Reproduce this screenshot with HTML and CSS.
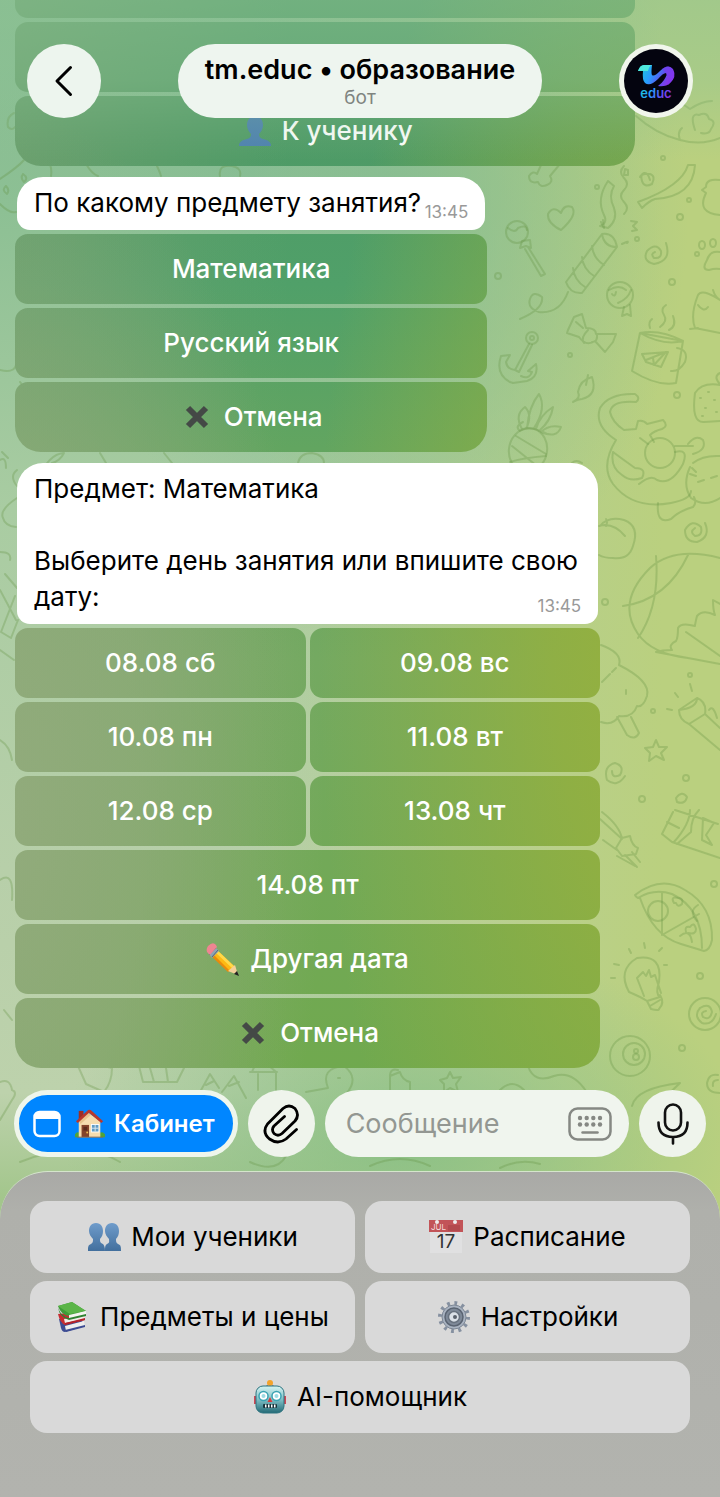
FILE: index.html
```html
<!DOCTYPE html>
<html lang="ru">
<head>
<meta charset="utf-8">
<meta name="viewport" content="width=device-width, initial-scale=1">
<title>tm.educ • образование</title>
<link rel="stylesheet" href="styles.css">
</head>
<body>
<div class="app">
  <svg class="doodles" viewBox="0 0 720 1497" preserveAspectRatio="xMaxYMin slice" aria-hidden="true">
    <!-- top right -->
    <path d="M636 116q20 18 44 24q22 6 40-2M680 140q-3-8 2-12M695 130q-6-18 4-15q8-4 10 4q8 2 2 10q-2 6-10 4M660 97q14 0 30 12q12-8 22-8"/>
    <path d="M541 165l-4 9q-4-4-8 2q0 8 9 6q2 6 9 3q7-3 3-9l10-12"/>
    <path d="M608 181q-12 18-4 34q4 8-4 11l8 2q10-8 6-20q-6-12 0-22zM624 166q-6 6 0 12t0 12q-6 6 0 12t0 12"/>
    <path d="M638 202q44-16 50-37h7q-2 32-40 34q-6 2-13 9zM650 180q-2-8-6-7t-2 8t10 3q4-8-2-10q-8-1-10 3"/>
    <path d="M720 180q-14-2-14 7l-4 3l4 3q-10 20 14 22"/>
    <path d="M561 230q-14-7-13-16q5-9 13-1q3-9 11-6q6 8-11 23z"/>
    <circle cx="517" cy="232" r="11"/><path d="M508 228q7 6 10 0q8-4 9 2M522 241l-2 7l6-2l5 2l-1-8zM525 249l16 27l4-2l-17-27"/>
    <path d="M602 234q12-2 15 13l-35 46q-12 1-16-11zM602 234q2 13 15 13M592 246q1 12 12 19M582 257q1 12 12 19M573 268q1 12 12 19M568 292q-8 22-29 20q-12-4-9-13t12-2q2 12-22 22M601 222l3 6l-1-8M622 244q8-4 5-1M631 221l6 1-4 4l4 4l-5 1"/>
    <path d="M666 243q6 18-12 21q-12-3-7-13q9-9 14 0q1 8-7 7q-4-4 1-6"/>
    <ellipse cx="702" cy="245" rx="3" ry="4"/><ellipse cx="713" cy="243" rx="3" ry="4"/><circle cx="697" cy="254" r="2"/><path d="M720 252q-10-2-13 8q-6 10 2 10q6-2 11-1"/>
    <circle cx="620" cy="295" r="13"/><path d="M609 290q10-6 17 0M612 294q3 4 4-2M618 303q10-4 13-13M624 307l-2 9l5-2l4 2l-1-11"/>
    <path d="M568 330l6-13l8-3l4 14q10 0 10 6l20 0l-3 8l-8 10l-10-11q-9 6-16-4l-12-4zM588 330q-8 8-4 13M597 334q1 8-5 8M576 322l7 6"/>
    <circle cx="532" cy="338" r="6"/><circle cx="532" cy="338" r="2"/><path d="M529 344l-14 26l4 2l13-27M515 370q-8-1-9-8l4-7l-9 1q-6 18 9 26l3 1l14-2q12-4 9-17l-8 7l4 1q-3 8-11 4"/>
    <path d="M640 333l43 8-7 42q-18 4-44-12zM640 333q20-4 43 8q-20 5-43-8M677 348q12 2 8 14q-6 10-14 9M642 354l26-2l-7 15l-15-5zM646 360l20-8l-12 13l-1-7M650 328q-2-6 2-9M660 327q8-6 4-12q-4-6 2-10M669 330q8-4 4-14"/>
    <path d="M720 300q-18-12-22-5q-8 20-3 33l25 5M690 329l8-1M698 305q6 8 10 2M713 290q2 7 7 10"/>
    <path d="M573 402q8-4 5-10q2-12 14-15q6 18-10 22q-4 0-9 3zM586 385l2-10"/>
    <ellipse cx="528" cy="450" rx="19" ry="22" transform="rotate(12 528 450)"/><path d="M520 431q10-6 27 3M512 446l30 24M516 436l30 18M510 462q12-4 36-6M522 429q-8-14 3-22q8 8 1 22M527 428q2-22 12-34q8 14-5 34M536 429q4-14 17-22q-2 14-14 24M541 432q8-8 20-5q-4 12-20 5M519 430q-4-4 4-8"/>
    <path d="M616 440q-22-14-16-32q9-15 35-14q6 4 1 8q-24-2-26 10q2 10 14 18l12-1l2-8q6-1 9 3l16-4q6 6-1 9q-8 2-12 6l4 7M616 440q-16 26-3 44q20 26 58 19q20-4 20-12M613 452q8 6 22 16q12 0 7 10q-12 4-20-3q-12-8-9-23M640 438l8 6M675 446l18 0M675 452q14-4 8 12q-12 22-26 16q-6-6-18 4"/><circle cx="660" cy="453" r="15"/>
    <path d="M693 463q10-8 27-7M690 467q-8 18 1 31q14 10 29 0M688 444q8-10 15-4q4 10-10 14M658 503q-2 22 13 16q8-8 22-12q4-4 1-10M692 468l4 4M698 482l6-2M711 478l6-2M690 474l6 2"/>
    <path d="M720 385q-18-3-25 8q-4 30 9 29l16-1M720 373q-8 4 2 13M700 398h1M708 392h1M714 400h1M705 408h1M716 412h1M702 416h1"/>
    <!-- middle right -->
    <path d="M600 526q8-10 24-6q16 6 9 26q-4 14-20 12q-9 0-14-3M599 526q14-4 26 10M606 526q2-4 0-7"/>
    <path d="M705 523q6 14-8 19q-12 0-12-12q7-12 16-3q2 9-6 9q-6-4 0-8"/>
    <path d="M720 558q-46-12-70 10q-34 34-12 66q14 20 50 24M656 556q4 50-18 82M623 606q44-6 65-51M720 604l-7-4q0 10 2 15q-12-6-18 1q-2 8-2 10q-14-4-17 2q0 10-2 13q-8 4-4 9q-10 0-16 2l64 12M686 632l34 24"/>
    <path d="M601 645q22 8 18 20q32 16 28 31q-4 12-10 10q-4 12-18 10q-6 10-18 6M602 682l8-8M612 672l4-4M626 690v4M617 717l10 18q8 6 12-2l-8-16"/>
    <path d="M679 710l18-12q10 4 8 16l-16 10q-10-4-10-14zM679 710q18-2 18-12M689 724l31 26M705 714l15 14M709 710q4-6 8 8M675 693l3 4M690 684l2 7M667 709l5 1"/>
    <path d="M656 740l3 7l8 0l-6 6l3 7l-8-4l-7 5l1-8l-5-5l8-1zM625 776q-8 12-18 4q-4-14 8-17q10 3 5 12q-8 4-8-4"/>
    <path d="M602 812q18 14 20 27l-22-20M603 840l14 10M622 838l8-2q2 10 8 12l-2 6l-14 2l-6-8zM617 856l18 10M625 855l12 12M632 852l8 10"/>
    <path d="M675 810l43 14M673 812l-11 22l10 8l48 16M690 810q0 14-16 32M699 810q-8 8-8 22l-14 12M667 822l12 6M703 818l11 5l-8 12l6 10l-10-5zM676 798q6-8 11-1q-2 8-10 5z"/>
    <path d="M635 895q26-20 50-5q28 16 27 50q-2 10-8 11l-23-7q-28-8-41-46q-4 0-5-3zM638 898q16-10 34-4q30 14 30 54M662 892v43l37-21"/><circle cx="658" cy="911" r="10"/><path d="M680 936q10-8 12 6M698 905q-10 6-1 16M674 903q-4-7 4-5q6 0 4 6q-4 4-6-1zM686 932q-2-6 4-5q4-6 6 2q0 6-8 4"/>
    <path d="M647 1001q-6-4-18-9q-12-22 8-34q26-4 22 24q-4 12 1 15zM647 1001l4 8q8 2 8 0q6-6 1-14M650 1006l10-6M644 996l-7-18l6-6l3 4l3-6l2 7l4-2l6 18M614 964l5 1M629 949l2 4M644 943l1 5M659 951l3-3M611 978l4 0M664 965l3 0"/>
    <circle cx="630" cy="1056" r="20"/><circle cx="634" cy="1054" r="11"/><circle cx="636" cy="1051" r="2"/><circle cx="636" cy="1057" r="3"/>
    <circle cx="705" cy="1014" r="16"/><path d="M716 1014q-4 12-14 9q-9-7-2-15q10-6 12 4q-2 9-9 5q-3-5 3-6M718 1075q-9-2-11 8q0 10 13 10M718 1080q-6 0-5 6"/>
    <path d="M632 1106q4-18 48-23q-12 12-26 24"/>
    <g><circle cx="498" cy="276" r="3"/><circle cx="597" cy="187" r="2"/><circle cx="680" cy="217" r="3"/><circle cx="672" cy="282" r="3"/><circle cx="570" cy="355" r="2"/><circle cx="677" cy="395" r="3"/><circle cx="637" cy="239" r="2"/><circle cx="605" cy="602" r="3"/><circle cx="690" cy="675" r="2"/><circle cx="653" cy="711" r="2"/><circle cx="686" cy="778" r="3"/><circle cx="642" cy="799" r="3"/><circle cx="714" cy="884" r="3"/><circle cx="700" cy="976" r="3"/><circle cx="682" cy="1048" r="3"/><circle cx="663" cy="158" r="2"/><circle cx="689" cy="200" r="2"/></g>
    <!-- left edge and strips between bubbles -->
    <path d="M14 113q-8 4-6 14q4 4 7 0M0 179q18-12 24-19M0 204q10 10 16 8M50 164q2 6 1 12M86 164q6 10 12 12M156 164q4 8 5 12M185 164l4-6M220 176q-2-12 12-10q10 2 8 10M6 186q4 4 1 8q-6-4-1-8M23 174q6 4 1 8q-4-4-1-8"/>
    <path d="M0 370q18 4 16-10M2 452l6 6M0 460q6-4 6 8M38 480q10-26 26-27q-4 8-12 10M17 470q-8 6 0 16M17 498q-18 12-14 20q2 8 13 9M5 574l12 14M0 552q12 0 10 8M15 596l-14 36l10 6l7-18M0 590l16 30M100 453l6 10M172 463l-8-10M298 463q2-10 14-10q12 2 12 10M572 463q4-4 10 0"/>
    <path d="M78 1066l8 18l18 8q8-10 8-24l-8-2M139 1066l4 16l34 0l8-16M150 1068l4 14M166 1068l2 14M200 1092l10-18l9 14M206 1085l8-4M222 1092l12-16l12 22M229 1086l10-4M250 1072h27M252 1072q6-18 24 0v20M258 1090v-16M306 1092l22-4q-8-20 16-22q16 12 2 28l-12 12M338 1078h2M0 1082q10-4 12 8q6 2 0 10l-12 20M390 1090v-14l10-4q2 8 10 10v10M390 1076q0-8 8-6M450 1072l3 6l8-1l-5 7l2 8l-8-4l-6 4l0-8l-4-4l7-2zM528 1066q6 18 26 10q18-6 32 15M500 1090q12-12 24 0"/>
    <path d="M20 1162q60-24 100 0M250 1162q26 12 36-6M370 1166q30-14 60 0M500 1168q20-10 40-4"/>
    <path d="M628 170v5h-4l1-6zM20 382q4 4 0 6M0 650l14 10M0 740q10 6 12 20M0 880q14-10 12 20M4 1010l8 10"/>
  </svg>

  <header class="topbar">
    <button class="round back" type="button" aria-label="Назад">
      <svg viewBox="0 0 20 32" class="ico-back"><path d="M16.500 2.500L3 16l13.500 13.500" fill="none" stroke="#000" stroke-width="3" stroke-linecap="round" stroke-linejoin="round"/></svg>
    </button>
    <div class="title">
      <h1>tm.educ • образование</h1>
      <p>бот</p>
    </div>
    <a class="round avatar" href="#" aria-label="Профиль">
      <svg viewBox="0 0 64 64">
        <defs>
          <linearGradient id="rib" x1="0" y1="0" x2="1" y2=".3"><stop offset="0" stop-color="#19d5cf"/><stop offset=".45" stop-color="#2a9dff"/><stop offset=".75" stop-color="#5a55f0"/><stop offset="1" stop-color="#8a35e8"/></linearGradient>
        </defs>
        <circle cx="32" cy="32" r="32" fill="#04040f"/>
        <path d="M14 22q2-6 6-6h8q-1 8 0 10q2 2 8-4q8-8 13-2q4 8-3 14q-4 4-12 3q4-3 6-6q4-6 2-7q-3 0-8 6q-8 8-13 4q-3-3-2-12z" fill="url(#rib)"/>
        <path d="M14 22q2-6 6-6h8q-3 1-4 6z" fill="#4fe8dc"/>
        <path d="M38 20q8-6 12 3q1 8-6 13q2-10-6-16z" fill="#7b38ee" opacity=".6"/>
        <text x="32" y="49" text-anchor="middle" class="logo-text" fill="url(#rib)">educ</text>
      </svg>
    </a>
  </header>

  <main class="chat">
    <section class="group group-a">
      <div class="keys">
        <button type="button" class="key wide cut" aria-label="Предыдущее действие"></button>
        <button type="button" class="key wide" aria-label="Действие"></button>
        <button type="button" class="key wide last">
          <svg class="emoji" viewBox="0 0 34 32"><path d="M17 1c5 0 8 4 8 9 0 4-2 7-4 9 0 3 1 4 4 5 5 1 8 3 8 7H1c0-4 3-6 8-7 3-1 4-2 4-5-2-2-4-5-4-9 0-5 3-9 8-9z" fill="#4d80b0"/></svg>
          <span>К ученику</span>
        </button>
      </div>
    </section>

    <section class="group group-b">
      <div class="bubble"><p>По какому предмету занятия? <time>13:45</time></p></div>
      <div class="keys">
        <button type="button" class="key wide">Математика</button>
        <button type="button" class="key wide">Русский язык</button>
        <button type="button" class="key wide last">
          <svg class="emoji cross" viewBox="0 0 34 32"><path d="M8 7l18 18M26 7L8 25" stroke="#444946" stroke-width="6"/></svg>
          <span>Отмена</span>
        </button>
      </div>
    </section>

    <section class="group group-c">
      <div class="bubble"><p>Предмет: Математика<br><br>Выберите день занятия или впишите свою дату: <time>13:45</time></p></div>
      <div class="keys">
        <button type="button" class="key">08.08 сб</button>
        <button type="button" class="key">09.08 вс</button>
        <button type="button" class="key">10.08 пн</button>
        <button type="button" class="key">11.08 вт</button>
        <button type="button" class="key">12.08 ср</button>
        <button type="button" class="key">13.08 чт</button>
        <button type="button" class="key wide">14.08 пт</button>
        <button type="button" class="key wide">
          <svg class="emoji" viewBox="0 0 34 34">
            <path d="M9 6l19 18-5 5L5 12z" fill="#fdb913"/><path d="M11 8l18 17-2 2L9 10z" fill="#ffd84a"/><path d="M6 11l18 18-2 1L4 13z" fill="#e88b0c"/>
            <path d="M29 23l3 10-10-4z" fill="#f3cf98"/><path d="M31 29l2 5-5-2z" fill="#222"/>
            <path d="M8 4l5 5-7 7-4-5z" fill="#8fa3b4"/><path d="M10 6l-7 7M12 8l-6 7" stroke="#56697a"/>
            <path d="M2 4q5-5 8-1l1 2-7 8-3-3q-1-3 1-6z" fill="#ee8591"/>
          </svg>
          <span>Другая дата</span>
        </button>
        <button type="button" class="key wide last">
          <svg class="emoji cross" viewBox="0 0 34 32"><path d="M8 7l18 18M26 7L8 25" stroke="#444946" stroke-width="6"/></svg>
          <span>Отмена</span>
        </button>
      </div>
    </section>
  </main>

  <form class="composer">
    <button type="button" class="cabinet">
      <svg class="ico-window" viewBox="0 0 28 28"><rect x="1.500" y="2" width="25" height="24" rx="5" fill="none" stroke="#fff" stroke-width="2.500"/><path d="M1.500 9V7q0-5 5-5h15q5 0 5 5v2z" fill="#fff"/></svg>
      <svg class="house" viewBox="0 0 32 32">
        <rect x="4" y="2" width="5" height="9" fill="#9e2f24"/><path d="M0 27q2-4 6-1v4H0zM32 27q-3-4-6-1v4h6z" fill="#4fa33a"/>
        <path d="M4 13L14 4l13 9v17H4z" fill="#f6dcae"/><path d="M4 13L14 4l3 2-11 10z" fill="#e8c48c"/>
        <path d="M1 13L14 1q2-1 4 1l12 11-2 2L15 4 3 15z" fill="#b9382c"/>
        <rect x="7" y="17" width="8" height="13" fill="#84432a"/><rect x="9" y="19" width="4" height="4" fill="#5c2b1c"/><circle cx="13" cy="25" r="1" fill="#f0c050"/>
        <rect x="17" y="16" width="9" height="9" fill="#fff"/><rect x="18" y="17" width="7" height="7" fill="#5f9bc4"/><path d="M21.500 17v7M18 20.500h7" stroke="#dbe8f0"/>
        <path d="M2 30h28" stroke="#8a6a50"/>
      </svg>
      <span>Кабинет</span>
    </button>
    <button type="button" class="round small" aria-label="Прикрепить">
      <svg class="ico-clip" viewBox="0 0 36 40"><path d="M33.500 25.500L23 35Q15 41 6.500 35Q-1.500 28 4.500 20L20 4.500Q26-.5 32 4.500Q37 11 32 17L19 29.500Q15 33 11 29.500Q8 25.500 11 22L21.500 12.500" fill="none" stroke="#000" stroke-width="2.800" stroke-linecap="round" stroke-linejoin="round"/></svg>
    </button>
    <div class="field">
      <input type="text" placeholder="Сообщение" aria-label="Сообщение">
      <button type="button" class="kbd" aria-label="Клавиатура бота">
        <svg viewBox="0 0 44 34"><rect x="1.500" y="1.500" width="41" height="31" rx="8" fill="none" stroke="#858883" stroke-width="2.500"/><g fill="#858883"><circle cx="12" cy="11" r="2.200"/><circle cx="18.700" cy="11" r="2.200"/><circle cx="25.300" cy="11" r="2.200"/><circle cx="32" cy="11" r="2.200"/><circle cx="12" cy="17.500" r="2.200"/><circle cx="18.700" cy="17.500" r="2.200"/><circle cx="25.300" cy="17.500" r="2.200"/><circle cx="32" cy="17.500" r="2.200"/></g><path d="M14.500 25.500h15" stroke="#858883" stroke-width="2.500" stroke-linecap="round"/></svg>
      </button>
    </div>
    <button type="button" class="round small" aria-label="Голосовое сообщение">
      <svg class="ico-mic" viewBox="0 0 32 42"><g fill="none" stroke="#111" stroke-width="2.600" stroke-linecap="round"><rect x="8" y="1.500" width="16" height="26" rx="8"/><path d="M1.500 19.500q0 14.500 14.500 14.500t14.500-14.500M16 34v6.500"/></g></svg>
    </button>
  </form>

  <nav class="panel">
    <button type="button" class="menu-key">
      <svg class="emoji" viewBox="0 0 34 28"><defs><linearGradient id="ppl" x1="0" y1="0" x2="0" y2="1"><stop offset="0" stop-color="#6f9ccb"/><stop offset="1" stop-color="#426f9d"/></linearGradient></defs>
      <path d="M9 0c5 0 7 4 7 8 0 3-1 6-3 8 0 2 0 4 3 5 1 1 2 3 2 7H1c0-4 0-6 3-7 2-1 2-3 2-5-2-2-4-5-4-8 0-4 2-8 7-8z" fill="url(#ppl)"/><path d="M25 0c5 0 7 4 7 8 0 3-1 6-3 8 0 2 0 4 2 5 3 1 3 3 3 7H18c0-4 0-6 2-7 3-1 2-3 2-5-2-2-4-5-4-8 0-4 2-8 7-8z" fill="url(#ppl)"/></svg>
      <span>Мои ученики</span>
    </button>
    <button type="button" class="menu-key">
      <svg class="emoji" viewBox="0 0 34 34"><path d="M1 11h32v22H1z" fill="#e0e0e1"/><path d="M0 0h34v12H0z" fill="#c25458"/><circle cx="8" cy="2" r="2" fill="#eee"/><circle cx="26" cy="2" r="2" fill="#eee"/><path d="M20 5v6M22 5v6M24 5v6M26 5v6M28 5v6M30 5v6" stroke="#a44045"/><text x="2" y="10" class="cal-month">JUL</text><text x="17" y="28" text-anchor="middle" class="cal-day">17</text></svg>
      <span>Расписание</span>
    </button>
    <button type="button" class="menu-key">
      <svg class="emoji" viewBox="0 0 34 32">
        <path d="M3 18l20-3 6 10-20 6q-3 0-4-4z" fill="#3d4c93"/><path d="M9 25l19-5 1 5-19 5z" fill="#eee"/><path d="M9 29l20-5v2L10 31z" fill="#3d4c93"/>
        <path d="M2 13l20-2 7 8-20 5q-5-2-7-11z" fill="#c62d32"/><path d="M8 18l20-4 1 4-20 4z" fill="#f2eee8"/><path d="M9 22l20-5v2L9 24z" fill="#b3222a"/>
        <path d="M2 5L16 1l14 9-17 5Q5 14 2 5z" fill="#3f9c39"/><path d="M2 5L16 1l14 9-16 3z" fill="#5bb548"/><path d="M13 14l17-4v4l-17 4z" fill="#f5f5f0"/><path d="M2 6q2 9 11 11l17-4v2l-17 4Q3 16 2 6z" fill="#2f8230"/>
      </svg>
      <span>Предметы и цены</span>
    </button>
    <button type="button" class="menu-key">
      <svg class="emoji" viewBox="0 0 34 34"><circle cx="17" cy="17" r="14" fill="none" stroke="#8590a0" stroke-width="4" stroke-dasharray="2.800 4.530"/><circle cx="17" cy="17" r="12" fill="#a9b3c1" stroke="#7d8795" stroke-width="1"/><circle cx="17" cy="17" r="9" fill="#7e8998" stroke="#5a6472" stroke-width="1.500"/><circle cx="17" cy="17" r="5.500" fill="#dbe1e8" stroke="#68727f" stroke-width="1.500"/><circle cx="18" cy="17" r="2" fill="#59616c"/></svg>
      <span>Настройки</span>
    </button>
    <button type="button" class="menu-key wide">
      <svg class="emoji" viewBox="0 0 34 34"><defs><linearGradient id="bot" x1="0" y1="0" x2="0" y2="1"><stop offset="0" stop-color="#d5f3f2"/><stop offset=".5" stop-color="#7fc0c6"/><stop offset="1" stop-color="#236975"/></linearGradient></defs>
      <path d="M14 5q3 3 6 0l2 3H12z" fill="#5a5563"/><circle cx="17" cy="3" r="3" fill="#f3a32a"/><path d="M1 16h3v8H1zM30 16h3v8h-3z" fill="#cf4755"/><rect x="3" y="6" width="28" height="27" rx="7" fill="url(#bot)" stroke="#2d7480"/><circle cx="10.500" cy="16" r="4.500" fill="#fff" stroke="#3aa2b2" stroke-width="1.500"/><circle cx="23.500" cy="16" r="4.500" fill="#fff" stroke="#3aa2b2" stroke-width="1.500"/><circle cx="10.500" cy="16" r="2" fill="#9bdbe3"/><circle cx="23.500" cy="16" r="2" fill="#9bdbe3"/><path d="M17 17l2.500 5h-5z" fill="#d83a3e"/><rect x="10" y="24" width="14" height="4" rx="1" fill="#16343c"/><path d="M12 26h1.500M15 26h1.500M18 26h1.500M21 26h1.500" stroke="#fff" stroke-width="3"/></svg>
      <span>AI-помощник</span>
    </button>
  </nav>
</div>
</body>
</html>
```
FILE: styles.css
```css
*, *::before, *::after { box-sizing: border-box; }

body {
  margin: 0;
  font-family: Inter, "Noto Sans", sans-serif;
  color: #000;
}

button {
  font: inherit;
  color: inherit;
  border: 0;
  padding: 0;
  cursor: pointer;
}

h1, p { margin: 0; }

.app {
  position: relative;
  display: flex;
  flex-direction: column;
  min-height: 100vh;
  overflow: hidden;
  background:
    radial-gradient(ellipse 340px 200px at 56% 76%, rgba(136, 191, 133, .9), rgba(136, 191, 133, 0)),
    radial-gradient(ellipse 300px 420px at 54% 14%, rgba(130, 187, 148, .75), rgba(130, 187, 148, 0)),
    linear-gradient(90deg, rgba(186, 208, 127, 0) 35%, #bad07f 92%),
    linear-gradient(180deg, #86bb91 0, #8dc094 14%, #a9cca2 34%, #b7cfa9 58%, #bdd2ac 73%, #a3c68c 80%);
}

.doodles {
  position: absolute;
  inset: 0;
  width: 100%;
  height: 100%;
  fill: none;
  stroke: rgba(100, 145, 66, .3);
  stroke-width: 2;
  stroke-linecap: round;
  stroke-linejoin: round;
  pointer-events: none;
}

/* Header floats over the scrolled conversation */
.topbar {
  position: absolute;
  inset: 0 0 auto;
  z-index: 2;
  display: flex;
  justify-content: space-between;
  align-items: flex-start;
  height: 160px;
  padding: 44px 27px 0;
  background: linear-gradient(180deg, rgba(142, 195, 148, .55) 0, rgba(142, 195, 148, .4) 50%, rgba(142, 195, 148, 0) 100%);
}

.round {
  display: flex;
  align-items: center;
  justify-content: center;
  flex: none;
  width: 74px;
  height: 74px;
  border-radius: 50%;
  background: #edf5ee;
}

.ico-back { width: 20px; height: 32px; }

.avatar svg { width: 64px; height: 64px; }
.avatar { background: #f1f6ec; }
.logo-text { font-size: 13px; font-weight: 600; }

.title {
  display: flex;
  flex-direction: column;
  align-items: center;
  height: 74px;
  padding: 8px 27px 0;
  border-radius: 37px;
  background: #eef5ef;
  text-align: center;
}
.title h1 { font-size: 27px; line-height: 36px; font-weight: 600; white-space: nowrap; }
.title p { font-size: 19px; line-height: 20px; color: #7f8480; }

.chat {
  position: relative;
  display: flex;
  flex-direction: column;
  gap: 11px;
  padding-left: 15px;
}

.group { display: flex; flex-direction: column; gap: 4px; }
.group-a { width: 88%; }
.group-b { width: 67%; }
.group-c { width: 83%; }

.bubble {
  margin: 0 2px;
  padding: 8px 17px 9px;
  border-radius: 26px 26px 13px 13px;
  background: #fff;
  font-size: 26px;
  line-height: 36px;
}
.bubble time {
  float: right;
  margin-top: 18px;
  font-size: 17px;
  line-height: 18px;
  color: #999;
}

.keys {
  display: grid;
  grid-template-columns: 1fr 1fr;
  gap: 4px;
}

.key {
  display: flex;
  align-items: center;
  justify-content: center;
  gap: 10px;
  height: 70px;
  border-radius: 13px;
  color: #fff;
  font-size: 26px;
  line-height: 36px;
  font-weight: 500;
  background:
    radial-gradient(ellipse 45% 48% at 0 55%, rgba(150, 172, 128, .85) 0, rgba(150, 172, 128, .6) 45%, rgba(150, 172, 128, 0) 100%) fixed,
    radial-gradient(ellipse 50% 60% at 94% 42%, rgba(152, 177, 60, 1) 0, rgba(152, 177, 60, .75) 35%, rgba(152, 177, 60, 0) 100%) fixed,
    linear-gradient(90deg, rgba(132, 164, 116, .5) 0, rgba(132, 164, 116, 0) 40%) fixed,
    linear-gradient(180deg, #4e9a66 9%, #50a069 19%, #62a560 30%, #74a961 44%, #70a94e 72%) fixed;
}
.wide { grid-column: 1 / -1; }
.cut { height: 18px; border-radius: 0 0 13px 13px; }
.last { border-radius: 13px 13px 26px 26px; }

.emoji { flex: none; width: 34px; height: 34px; }

.composer {
  position: relative;
  display: flex;
  gap: 10px;
  padding: 22px 14px 14px;
}

.cabinet {
  display: flex;
  align-items: center;
  gap: 14px;
  height: 67px;
  padding: 0 18px 0 14px;
  border: 5px solid #eff6ec;
  border-radius: 34px;
  background: #0086ff;
  color: #fff;
  font-size: 24px;
  font-weight: 600;
}
.cabinet span { margin-left: -5px; }
.ico-window { width: 28px; height: 28px; }
.house { width: 30px; height: 32px; }

.small { width: 67px; height: 67px; background: #eff4ec; }
.ico-clip { width: 36px; height: 40px; }
.ico-mic { width: 32px; height: 42px; }

.field {
  display: flex;
  flex: 1;
  align-items: center;
  min-width: 0;
  padding: 0 17px 0 21px;
  border-radius: 34px;
  background: #f0f5ee;
}
.field input {
  flex: 1;
  min-width: 0;
  padding: 0;
  border: 0;
  outline: 0;
  background: none;
  font: inherit;
  font-size: 27px;
}
.field input::placeholder { color: #939792; opacity: 1; }
.kbd { display: flex; background: none; }
.kbd svg { width: 44px; height: 34px; }

.panel {
  position: relative;
  flex: 1;
  display: grid;
  grid-template-columns: 1fr 1fr;
  grid-auto-rows: 72px;
  align-content: start;
  gap: 8px 10px;
  padding: 29px 30px 64px;
  border-top: 1px solid #d5e5cc;
  border-radius: 48px 48px 0 0;
  background: linear-gradient(180deg, #a9a9a6 0, #afb0ab 12%, #b2b3ae 100%);
}

.menu-key {
  display: flex;
  align-items: center;
  justify-content: center;
  gap: 10px;
  border-radius: 17px;
  background: #d9d9d9;
  font-size: 26px;
  line-height: 36px;
}

.cal-month { font-size: 8px; fill: #f3dcdc; }
.cal-day { font-size: 19px; fill: #333; }
```
